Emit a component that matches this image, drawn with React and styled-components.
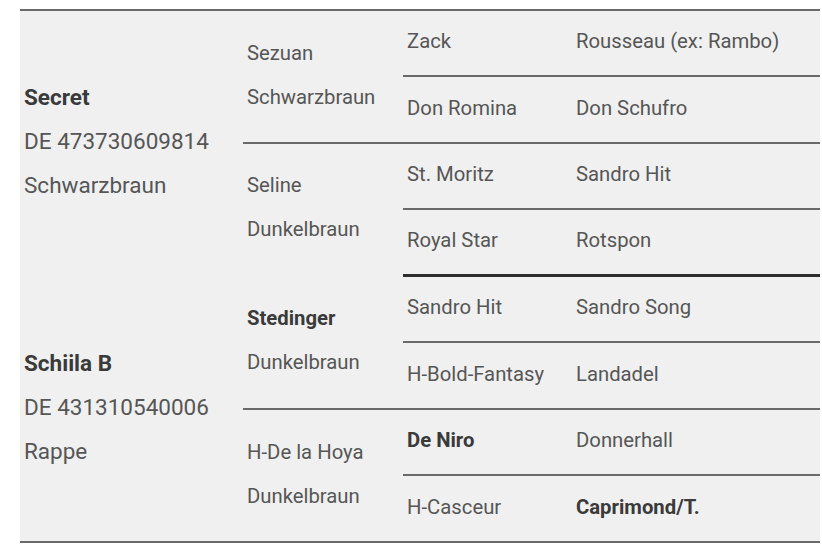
import React from "react";
import styled, { createGlobalStyle } from "styled-components";

const Global = createGlobalStyle`
  html, body { margin: 0; padding: 0; background: #ffffff; }
  body { font-family: Roboto, "Liberation Sans", Arial, sans-serif; }
`;

const Page = styled.div`
  padding: 9px 2px 0 20px;
  width: 800px;
`;

const Pedigree = styled.div`
  display: grid;
  grid-template-columns: 223px 160px 169px 248px;
  grid-template-rows: 66px 67px 66px 66px 67px 67px 66px 67px;
  background: #f0f0f0;
  border-bottom: 2px solid #6a6a6a;
`;

const Cell = styled.div`
  box-sizing: border-box;
  grid-column: ${(p) => p.$col};
  grid-row: ${(p) => p.$row} / span ${(p) => p.$span || 1};
  border-top: ${(p) =>
    p.$line === "thick"
      ? "3px solid #2e2e2e"
      : p.$line === "thin"
      ? "2px solid #6a6a6a"
      : "2px solid transparent"};
  display: flex;
  flex-direction: column;
  justify-content: center;
  padding: 0 0 4px 4px;
  font-size: ${(p) => (p.$big ? "22.5px" : "20.3px")};
  color: #565656;
`;

const Line = styled.div`
  line-height: 44px;
  white-space: nowrap;
  font-weight: ${(p) => (p.$bold ? 700 : 400)};
  color: ${(p) => (p.$bold ? "#3a3a3a" : "inherit")};
`;

const horses = [
  { row: 1, lines: [["Secret", true], ["DE 473730609814"], ["Schwarzbraun"]], line: "thin" },
  { row: 5, lines: [["Schiila B", true], ["DE 431310540006"], ["Rappe"]], line: "none" },
];

const parents = [
  { row: 1, lines: [["Sezuan"], ["Schwarzbraun"]], line: "thin" },
  { row: 3, lines: [["Seline"], ["Dunkelbraun"]], line: "thin" },
  { row: 5, lines: [["Stedinger", true], ["Dunkelbraun"]], line: "none" },
  { row: 7, lines: [["H-De la Hoya"], ["Dunkelbraun"]], line: "thin" },
];

const ancestors = [
  [["Zack"], ["Rousseau (ex: Rambo)"]],
  [["Don Romina"], ["Don Schufro"]],
  [["St. Moritz"], ["Sandro Hit"]],
  [["Royal Star"], ["Rotspon"]],
  [["Sandro Hit"], ["Sandro Song"]],
  [["H-Bold-Fantasy"], ["Landadel"]],
  [["De Niro", true], ["Donnerhall"]],
  [["H-Casceur"], ["Caprimond/T.", true]],
];

export default function App() {
  return (
    <>
      <Global />
      <Page>
        <Pedigree>
          {horses.map((h) => (
            <Cell key={"h" + h.row} $col={1} $row={h.row} $span={4} $line={h.line} $big>
              {h.lines.map(([t, b]) => (
                <Line key={t} $bold={b}>{t}</Line>
              ))}
            </Cell>
          ))}
          {parents.map((p) => (
            <Cell key={"p" + p.row} $col={2} $row={p.row} $span={2} $line={p.line}>
              {p.lines.map(([t, b]) => (
                <Line key={t} $bold={b}>{t}</Line>
              ))}
            </Cell>
          ))}
          {ancestors.map((pair, i) =>
            pair.map(([t, b], j) => (
              <Cell
                key={"a" + i + j}
                $col={3 + j}
                $row={i + 1}
                $line={i === 4 ? "thick" : "thin"}
              >
                <Line $bold={b}>{t}</Line>
              </Cell>
            ))
          )}
        </Pedigree>
      </Page>
    </>
  );
}
